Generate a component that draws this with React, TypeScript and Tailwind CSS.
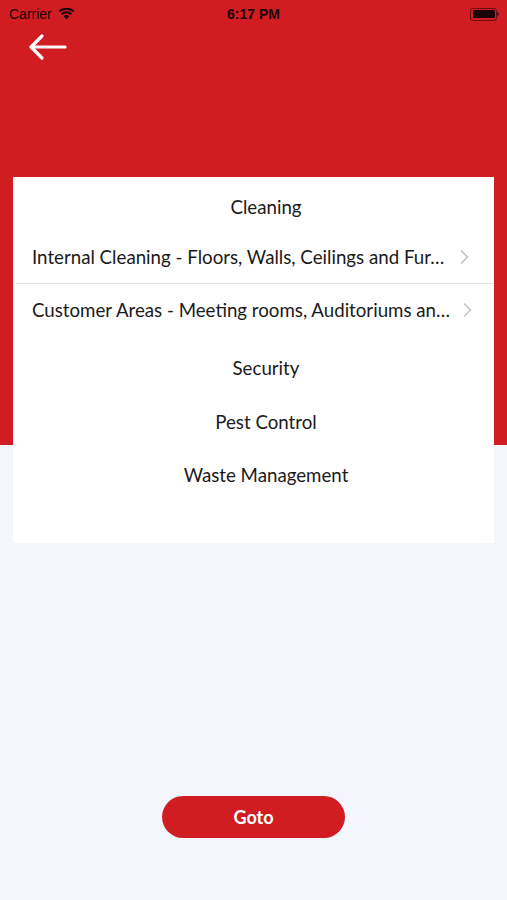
const subItems = [
  "Internal Cleaning - Floors, Walls, Ceilings and Fur…",
  "Customer Areas - Meeting rooms, Auditoriums an…",
];

function Chevron() {
  return (
    <svg width="11" height="16" viewBox="0 0 11 16" className="shrink-0">
      <path d="M2 1.5 L8.5 8 L2 14.5" fill="none" stroke="#c4c4c8" strokeWidth="1.6" />
    </svg>
  );
}

export default function App() {
  return (
    <div
      className="relative w-[507px] h-[900px] bg-[#f3f7fd] overflow-hidden"
      style={{ fontFamily: '"Source Sans Pro", Lato, "Noto Sans", sans-serif' }}
    >
      <div className="absolute inset-x-0 top-0 h-[445px] bg-[#d11c22]" />

      <div className="relative">
        {/* status bar */}
        <div
          className="h-[28px] flex items-center justify-between px-[9px] text-[#1a0606]"
          style={{ fontFamily: '"Liberation Sans", Arial, sans-serif' }}
        >
          <div className="flex items-center gap-[6px] text-[14px]">
            <span>Carrier</span>
            <svg width="17" height="12" viewBox="0 0 17 12">
              <path d="M8.5 11.5 L5.6 8.3 A4.2 4.2 0 0 1 11.4 8.3 Z" fill="#1a0606" />
              <path d="M3.6 6.2 A7 7 0 0 1 13.4 6.2" fill="none" stroke="#1a0606" strokeWidth="2" />
              <path d="M1.2 3.6 A10.5 10.5 0 0 1 15.8 3.6" fill="none" stroke="#1a0606" strokeWidth="2" />
            </svg>
          </div>
          <span className="absolute left-1/2 -translate-x-1/2 text-[14px] font-bold">6:17 PM</span>
          <div className="w-[27px] h-[13px] border border-[#1a0606]/60 rounded-[3px] p-[1.5px] relative mr-[1px]">
            <div className="w-full h-full bg-[#1a0606] rounded-[1.5px]" />
            <div className="absolute right-[-3px] top-[3.5px] w-[2px] h-[4px] bg-[#1a0606]/60 rounded-r" />
          </div>
        </div>

        {/* back arrow */}
        <div className="pl-[27px] pt-[5px] h-[149px]">
          <svg width="40" height="28" viewBox="0 0 40 28">
            <path d="M38 14 H4 M15 3 L4 14 L15 25" fill="none" stroke="#fff" strokeWidth="3.2" strokeLinecap="round" strokeLinejoin="round" />
          </svg>
        </div>

        {/* card */}
        <div className="mx-[13px] bg-white pt-[6px] pb-[41px] text-[#1a1a1a] text-[18.7px]">
          <div className="h-[48px] flex items-center justify-center pl-[25px]">Cleaning</div>
          {subItems.map((t, i) => (
            <div key={t}>
              {i > 0 && <div className="ml-[3px] h-px bg-[#e4e4e6]" />}
              <div className="h-[52px] flex items-center pl-[19px] pr-[24px] gap-[12px]">
                <span className="flex-1 whitespace-nowrap">{t}</span>
                <Chevron />
              </div>
            </div>
          ))}
          <div className="mt-[5px] h-[54px] flex items-center justify-center pl-[25px]">Security</div>
          <div className="h-[54px] flex items-center justify-center pl-[25px]">Pest Control</div>
          <div className="h-[53px] flex items-center justify-center pl-[25px]">Waste Management</div>
        </div>

        {/* button */}
        <div className="flex justify-center pt-[253px]">
          <button className="w-[183px] h-[42px] rounded-full bg-[#d11c22] text-white text-[18px] font-bold">
            Goto
          </button>
        </div>
      </div>
    </div>
  );
}
